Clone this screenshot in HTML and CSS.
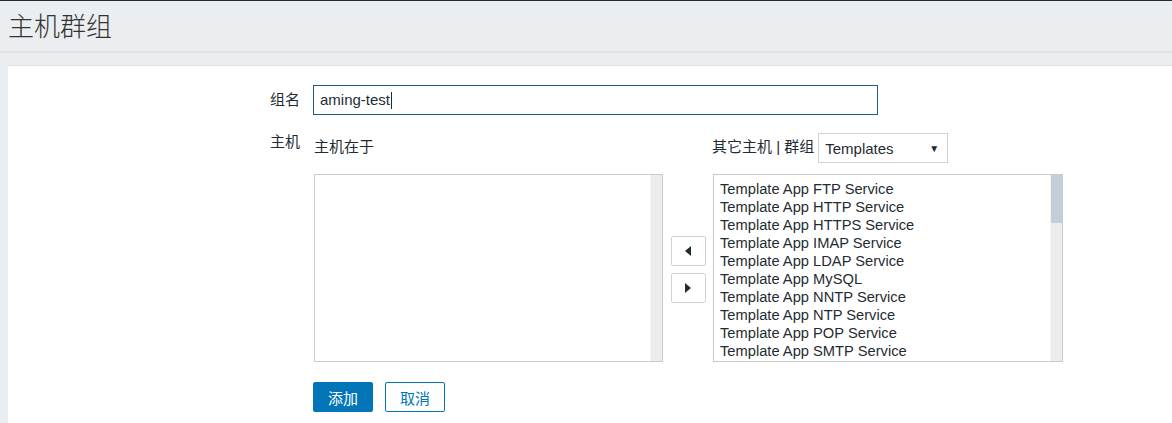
FILE: index.html
```html
<html>
  <head>
    <title>主机群组</title>
    <link rel="stylesheet" href="styles.css">
  </head>
  <body>
    <div id="header">
      <h1 class="title">主机群组</h1>
    </div>
    <div id="main">
      <div class="form">
        <label class="label label-mid">组名</label>
        <div class="field">
          <div class="input">aming-test<span class="caret"></span></div>
        </div>

        <label class="label">主机</label>
        <div class="transfer">
          <div class="head"><span class="head-text">主机在于</span></div>
          <div></div>
          <div class="head head-right">
            <span class="head-text">其它主机 | 群组</span>
            <div class="select"><span>Templates</span><span class="arrow">&#9660;</span></div>
          </div>

          <div class="listbox">
            <div class="items"></div>
            <div class="scroll"></div>
          </div>
          <div class="moves">
            <button class="move"><svg width="8" height="10" viewBox="0 0 8 10"><path d="M7 0 L1 5 L7 10 Z" fill="#1f2c33"/></svg></button>
            <button class="move"><svg width="8" height="10" viewBox="0 0 8 10"><path d="M1 0 L7 5 L1 10 Z" fill="#1f2c33"/></svg></button>
          </div>
          <div class="listbox">
            <div class="items">
              <div>Template App FTP Service</div>
              <div>Template App HTTP Service</div>
              <div>Template App HTTPS Service</div>
              <div>Template App IMAP Service</div>
              <div>Template App LDAP Service</div>
              <div>Template App MySQL</div>
              <div>Template App NNTP Service</div>
              <div>Template App NTP Service</div>
              <div>Template App POP Service</div>
              <div>Template App SMTP Service</div>
            </div>
            <div class="scroll"><div class="thumb"></div></div>
          </div>
        </div>

        <div></div>
        <div class="actions">
          <button class="btn btn-primary">添加</button>
          <button class="btn btn-alt">取消</button>
        </div>
      </div>
    </div>
  </body>
</html>
```
FILE: styles.css
```css
body {
  margin: 0;
  background-color: #ebeef0;
  font-family: "Liberation Sans", "Noto Sans CJK SC", sans-serif;
  font-size: 15px;
  color: #1f2c33;
  overflow: hidden;
}
#header {
  border-top: 1px solid #1f2c33;
  height: 50px;
  border-bottom: 2px solid #e1e5e8;
  display: flex;
  align-items: center;
}
.title {
  margin: 0 0 0 8px;
  font-size: 26px;
  font-weight: 300;
  color: #333;
  line-height: 30px;
  padding-top: 2px;
}
#main {
  margin: 12px 0 0 8px;
  background-color: #fff;
  border-top: 1px solid #dcdfe2;
  height: 358px;
  padding-top: 19px;
  box-sizing: border-box;
}
.form {
  display: grid;
  grid-template-columns: 292px 1fr;
  column-gap: 13px;
  row-gap: 18px;
}
.label {
  text-align: right;
  line-height: 18px;
  padding-top: 0;
}
.label-mid {
  padding-top: 6px;
}
.input {
  width: 565px;
  height: 30px;
  box-sizing: border-box;
  border: 1px solid #1e5b8a;
  padding: 0 6px;
  line-height: 28px;
  display: flex;
  align-items: center;
}
.caret {
  display: inline-block;
  width: 1px;
  height: 17px;
  background-color: #1f2c33;
  margin-left: 1px;
}
.transfer {
  display: grid;
  grid-template-columns: 349px 50px 350px;
  grid-template-rows: 30px 188px;
  row-gap: 11px;
  margin-left: 1px;
}
.head {
  display: flex;
  align-items: center;
}
.head-text {
  line-height: 18px;
  padding-bottom: 2px;
}
.head-right {
  gap: 4px;
  margin-left: -1px;
}
.select {
  width: 130px;
  height: 30px;
  box-sizing: border-box;
  border: 1px solid #cfd3d6;
  display: flex;
  align-items: center;
  justify-content: space-between;
  padding: 0 8px 0 6px;
  background-color: #fff;
  font-size: 15px;
}
.arrow {
  font-size: 10px;
  color: #1f2c33;
}
.listbox {
  border: 1px solid #c9ccce;
  display: flex;
}
.items {
  flex: 1;
  padding: 5px 6px;
  line-height: 18px;
  font-size: 14.7px;
  white-space: nowrap;
  overflow: hidden;
}
.scroll {
  width: 11px;
  background-color: #ececec;
  border-left: 1px solid #f4f4f4;
}
.thumb {
  height: 48px;
  background-color: #c4ced6;
}
.moves {
  display: flex;
  flex-direction: column;
  align-items: center;
  justify-content: center;
  gap: 7px;
  padding-top: 2px;
}
.move {
  width: 35px;
  height: 30px;
  background-color: #fff;
  border: 1px solid #cfd3d6;
  border-radius: 2px;
  display: flex;
  align-items: center;
  justify-content: center;
  padding: 0;
}
.actions {
  display: flex;
  gap: 12px;
  padding-top: 2px;
}
.btn {
  height: 30px;
  width: 60px;
  border-radius: 2px;
  font-family: "Liberation Sans", "Noto Sans CJK SC", sans-serif;
  font-size: 15px;
  padding: 0;
}
.btn-primary {
  background-color: #0275b8;
  border: 1px solid #0275b8;
  color: #fff;
}
.btn-alt {
  background-color: #fff;
  border: 1px solid #0275b8;
  color: #0275b8;
}
```
